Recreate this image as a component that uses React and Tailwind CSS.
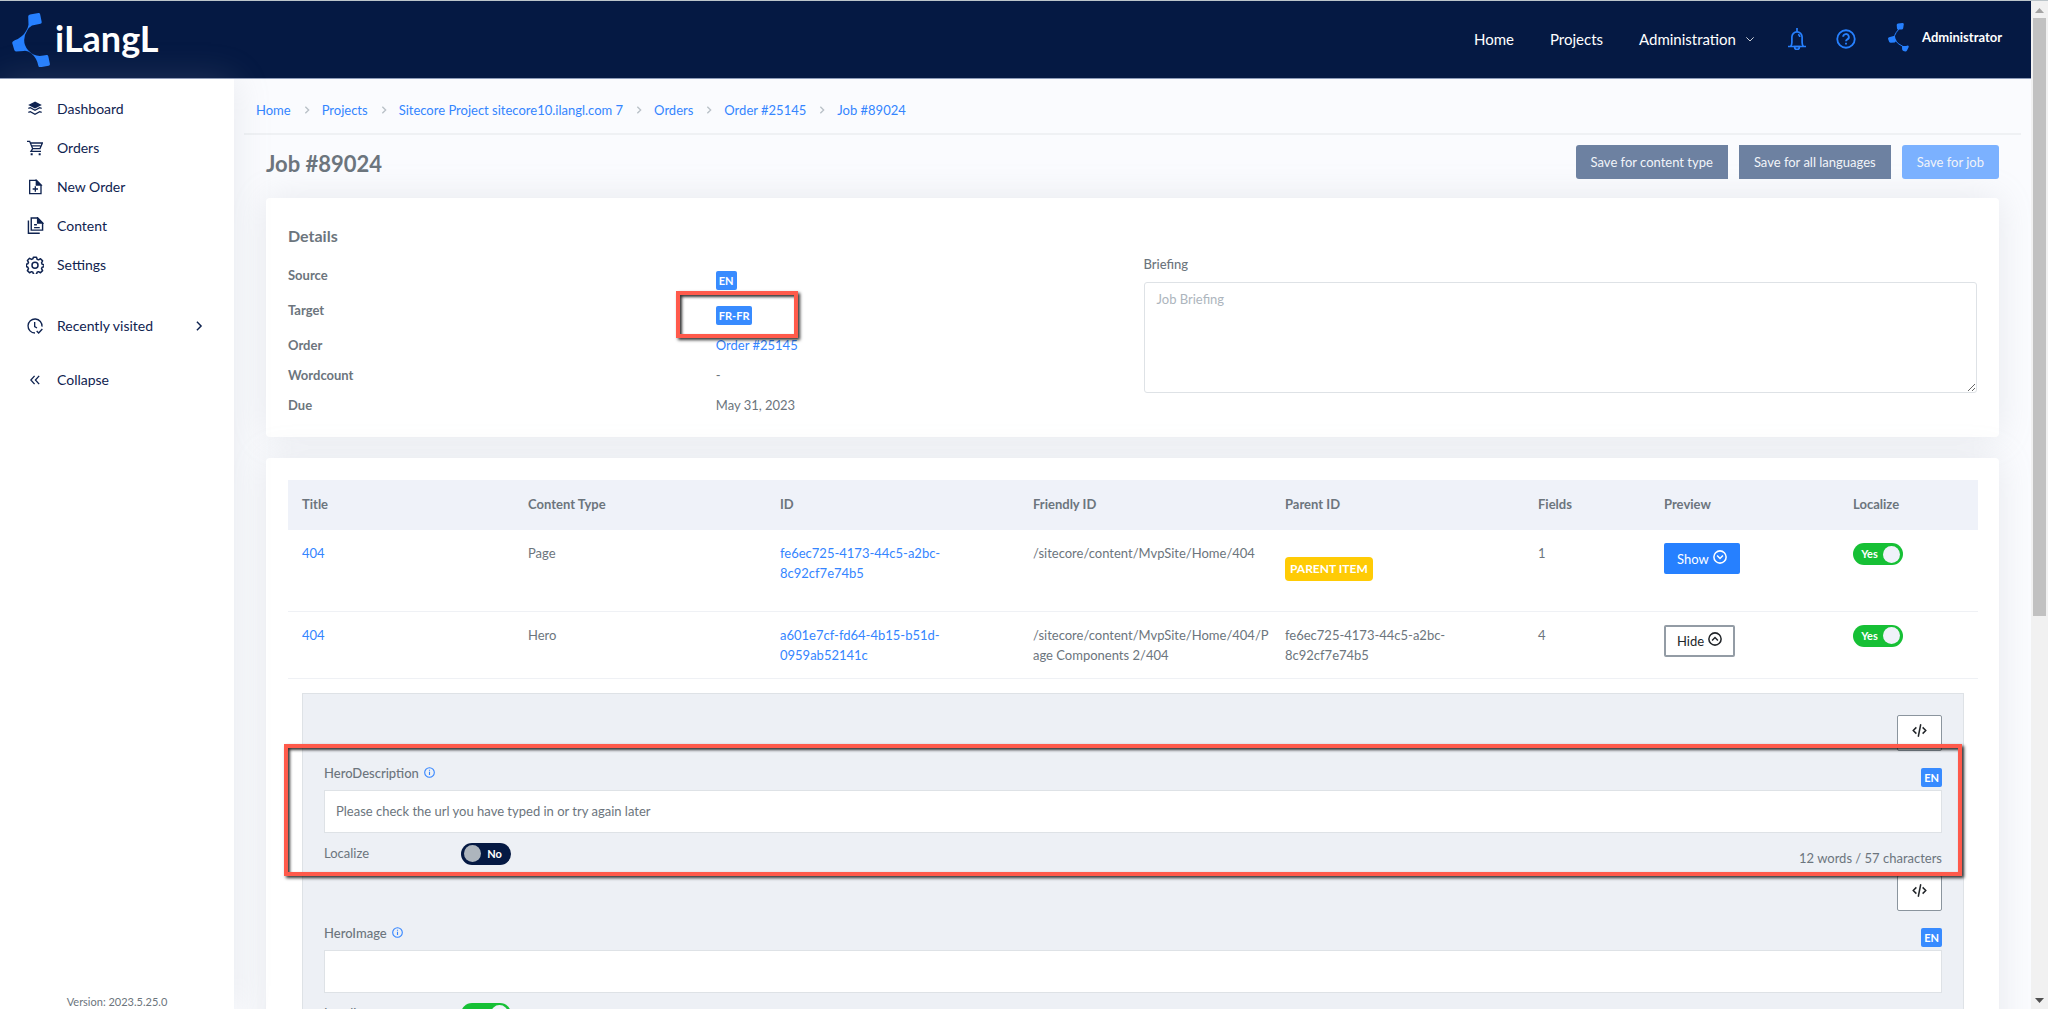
import React, { useState } from 'react';

const breadcrumbs = [
  'Home',
  'Projects',
  'Sitecore Project sitecore10.ilangl.com 7',
  'Orders',
  'Order #25145',
  'Job #89024',
];

const menu = [
  { label: 'Dashboard', icon: LayersIcon },
  { label: 'Orders', icon: CartIcon },
  { label: 'New Order', icon: FilePlusIcon },
  { label: 'Content', icon: FilesIcon },
  { label: 'Settings', icon: GearIcon },
];

const items = [
  {
    title: '404',
    type: 'Page',
    id: 'fe6ec725-4173-44c5-a2bc-8c92cf7e74b5',
    friendlyId: '/sitecore/content/MvpSite/Home/404',
    parentId: null,
    fields: 1,
    open: false,
  },
  {
    title: '404',
    type: 'Hero',
    id: 'a601e7cf-fd64-4b15-b51d-0959ab52141c',
    friendlyId: '/sitecore/content/MvpSite/Home/404/Page Components 2/404',
    parentId: 'fe6ec725-4173-44c5-a2bc-8c92cf7e74b5',
    fields: 4,
    open: true,
  },
];

const heroFields = [
  {
    name: 'HeroDescription',
    value: 'Please check the url you have typed in or try again later',
    localize: false,
    count: '12 words / 57 characters',
    marked: true,
  },
  { name: 'HeroImage', value: '', localize: true },
];

export default function App() {
  return (
    <div className="flex h-screen overflow-hidden border-t border-[#bcc5ca] bg-[#fafbfe] font-['Lato',sans-serif] text-[13px] leading-5 text-[#6c757d]">
      <div className="flex min-w-0 flex-1 flex-col">
        <Header />
        <div className="flex min-h-0 flex-1">
          <Sidebar />
          <main className="min-w-0 flex-1 overflow-hidden px-[10px]">
            <Breadcrumbs />
            <div className="px-[22px]">
              <div className="flex items-start justify-between pt-[10px] pb-[19px]">
                <h1 className="pt-1 text-[22px] leading-[30px] font-bold">Job #89024</h1>
                <div className="flex gap-[11px] text-[#f1f4f9]">
                  <button type="button" className="h-[34px] rounded-l-[3px] bg-[#6d81a1] px-[15px]">
                    Save for content type
                  </button>
                  <button type="button" className="h-[34px] bg-[#6d81a1] px-[15px]">
                    Save for all languages
                  </button>
                  <button type="button" className="h-[34px] rounded-[3px] bg-[#7bb1ff] px-[15px]">
                    Save for job
                  </button>
                </div>
              </div>
              <DetailsCard />
              <ItemsCard />
            </div>
          </main>
        </div>
      </div>
      <ScrollTrack />
    </div>
  );
}

function Header() {
  return (
    <header className="flex h-[78px] shrink-0 items-center justify-between border-b border-[#8d9bb8] bg-[#051943] pr-[29px] pl-[12px] text-[15px] text-white">
      <a href="#" className="flex items-center gap-[5px]">
        <LogoMark className="h-[54px] w-[38px]" />
        <span className="pb-1 text-[36px] leading-10 font-bold">iLangL</span>
      </a>
      <nav className="flex items-center pb-px">
        <a href="#" className="mr-[36px]">Home</a>
        <a href="#" className="mr-[36px]">Projects</a>
        <a href="#" className="mr-[34px] flex items-center gap-[10px]">
          Administration
          <Icon className="size-[8px]" stroke="2.4"><path d="M1 7l11 11L23 7" /></Icon>
        </a>
        <button type="button" aria-label="Notifications" className="mr-[30px] text-[#2680ff]">
          <BellIcon />
        </button>
        <button type="button" aria-label="Help" className="mr-[32px] text-[#2680ff]">
          <Icon className="size-[20px]" stroke="2.2">
            <circle cx="12" cy="12" r="10.5" />
            <path d="M8.6 9.4a3.4 3.4 0 1 1 5 3c-1.1.6-1.6 1.1-1.6 2.4M12 16.4v2.2" />
          </Icon>
        </button>
        <a href="#" className="flex items-center gap-[13px] text-[13px] font-bold">
          <Avatar />
          <span className="pb-1">Administrator</span>
        </a>
      </nav>
    </header>
  );
}

function Sidebar() {
  return (
    <aside className="relative z-10 flex w-[234px] shrink-0 flex-col bg-white pt-[10px] text-sm text-[#0f2350] shadow-[0_0_35px_rgba(154,161,171,0.2)]">
      {menu.map(({ label, icon: MenuIcon }) => (
        <a key={label} href="#" className="flex h-[39px] items-center pl-[26px]">
          <span className="flex w-[31px] items-center pl-px"><MenuIcon /></span>
          {label}
        </a>
      ))}
      <a href="#" className="mt-[22px] flex h-[39px] items-center pr-[30px] pl-[26px]">
        <span className="w-[31px] pl-px"><ClockCheckIcon /></span>
        <span className="flex-1">Recently visited</span>
        <Icon className="size-[10px]" stroke="3.5"><path d="M7 2l10 10L7 22" /></Icon>
      </a>
      <button type="button" className="mt-[15px] flex h-[39px] items-center pl-[26px]">
        <span className="w-[31px] pl-[4px]">
          <Icon className="size-[10px]" stroke="3.2"><path d="M11 2L2 12l9 10M22 2l-9 10 9 10" /></Icon>
        </span>
        Collapse
      </button>
      <p className="mt-auto text-center text-[11px] leading-[14px] text-[#6c757d]">Version: 2023.5.25.0</p>
    </aside>
  );
}

function Breadcrumbs() {
  return (
    <nav className="flex h-[56px] items-center border-b-2 border-[#eff1f4] pt-[11px] pb-1 pl-[12px]">
      {breadcrumbs.map((crumb, index) => (
        <React.Fragment key={crumb}>
          {index > 0 && (
            <Icon className="mr-[11px] ml-[12px] size-[8px] text-[#b9c0c7]" stroke="4"><path d="M7 2l10 10L7 22" /></Icon>
          )}
          <a href="#" className="text-[#3485ff]">{crumb}</a>
        </React.Fragment>
      ))}
    </nav>
  );
}

function DetailsCard() {
  return (
    <section className="grid grid-cols-2 gap-[22px] rounded bg-white p-[22px] shadow-[0_0_35px_rgba(154,161,171,0.2)]">
      <div>
        <h2 className="mb-[13px] text-base leading-8 font-bold">Details</h2>
        <dl>
          <DetailRow label="Source" height="h-[35px]">
            <Badge className="mt-[6px]">EN</Badge>
          </DetailRow>
          <DetailRow label="Target" height="h-[35px]">
            <Badge className="mt-[6px]">FR-FR</Badge>
            <Marker className="-top-[9px] -left-[40px] h-[47px] w-[122px]" />
          </DetailRow>
          <DetailRow label="Order" height="h-[30px]">
            <a href="#" className="text-[#3485ff]">Order #25145</a>
          </DetailRow>
          <DetailRow label="Wordcount" height="h-[30px]">-</DetailRow>
          <DetailRow label="Due" height="h-[20px]">May 31, 2023</DetailRow>
        </dl>
      </div>
      <div className="pt-[34px]">
        <label htmlFor="briefing" className="mb-[8px] block font-medium">Briefing</label>
        <textarea
          id="briefing"
          placeholder="Job Briefing"
          className="block h-[111px] w-full rounded-[3px] border border-[#dee2e6] bg-white px-[12px] py-[6px] placeholder:text-[#adb5bd]"
        />
      </div>
    </section>
  );
}

function DetailRow({ label, height, children }) {
  return (
    <div className={`grid grid-cols-2 gap-[22px] ${height}`}>
      <dt className="font-bold">{label}</dt>
      <dd className="relative">{children}</dd>
    </div>
  );
}

function ItemsCard() {
  return (
    <section className="mt-[21px] rounded bg-white p-[22px] shadow-[0_0_35px_rgba(154,161,171,0.2)]">
      <table className="w-full table-fixed text-left">
        <colgroup>
          <col className="w-[226px]" />
          <col className="w-[252px]" />
          <col className="w-[253px]" />
          <col className="w-[252px]" />
          <col className="w-[253px]" />
          <col className="w-[126px]" />
          <col className="w-[189px]" />
          <col className="w-[139px]" />
        </colgroup>
        <thead>
          <tr className="h-[50px] bg-[#eff2f9]">
            {['Title', 'Content Type', 'ID', 'Friendly ID', 'Parent ID', 'Fields', 'Preview', 'Localize'].map((head) => (
              <th key={head} className="px-[14px] pb-[2px] font-bold">{head}</th>
            ))}
          </tr>
        </thead>
        <tbody>
          {items.map((item) => (
            <ItemRow key={item.id} item={item} />
          ))}
          <tr>
            <td colSpan={8} className="p-[14px]">
              <div className="border border-[#dee2e6] bg-[#edf0f5] px-[21px] pt-[21px]">
                {heroFields.map((field) => (
                  <FieldEditor key={field.name} field={field} />
                ))}
              </div>
            </td>
          </tr>
        </tbody>
      </table>
    </section>
  );
}

function ItemRow({ item }) {
  return (
    <tr className={`border-b border-[#eff1f5] align-top [&>td]:px-[14px] [&>td]:py-[13px] ${item.open ? '' : 'h-[81px]'}`}>
      <td><a href="#" className="text-[#3485ff]">{item.title}</a></td>
      <td>{item.type}</td>
      <td><a href="#" className="text-[#3485ff]">{item.id}</a></td>
      <td><div className="-mr-[14px] break-all">{item.friendlyId}</div></td>
      <td>
        {item.parentId ?? (
          <span className="mt-[14px] inline-block h-[24px] rounded bg-[#ffcb05] px-[5px] text-xs leading-6 font-bold text-white">
            PARENT ITEM
          </span>
        )}
      </td>
      <td>{item.fields}</td>
      <td>
        {item.open ? (
          <button type="button" className="flex h-[32px] items-center gap-[4px] rounded-[2px] border-2 border-[#939ca5] bg-white px-[11px] text-[#212529]">
            Hide
            <Icon className="mb-1 size-[14px]" stroke="2.6">
              <circle cx="12" cy="12" r="10.5" />
              <path d="M7 14.5l5-5 5 5" />
            </Icon>
          </button>
        ) : (
          <button type="button" className="flex h-[31px] items-center gap-[4px] rounded-[2px] bg-[#2680ff] px-[13px] text-white">
            Show
            <Icon className="mb-1 size-[14px]" stroke="2.6">
              <circle cx="12" cy="12" r="10.5" />
              <path d="M7 9.5l5 5 5-5" />
            </Icon>
          </button>
        )}
      </td>
      <td><Toggle defaultOn label={`Localize ${item.type}`} /></td>
    </tr>
  );
}

function FieldEditor({ field }) {
  const [value, setValue] = useState(field.value);

  return (
    <div className="relative">
      <div className="flex justify-end">
        <button
          type="button"
          aria-label="Show source"
          className="flex h-[36px] w-[45px] items-center justify-center rounded-[2px] border border-[#8b959e] bg-white pb-1 text-[#212529]"
        >
          <Icon className="size-[15px]" stroke="2.4"><path d="M7 7l-5 5 5 5M17 7l5 5-5 5M14 2l-4 20" /></Icon>
        </button>
      </div>
      <div className="flex h-[39px] items-start justify-between">
        <label htmlFor={field.name} className="mt-[12px] flex items-center gap-[5px] font-medium">
          {field.name}
          <Icon className="size-[11px] text-[#3485ff]" stroke="2.4">
            <circle cx="12" cy="12" r="10.5" />
            <path d="M12 10.5v7M12 6v2.4" />
          </Icon>
        </label>
        <Badge className="mt-[17px]">EN</Badge>
      </div>
      <input
        id={field.name}
        value={value}
        onChange={(e) => setValue(e.target.value)}
        className="block h-[43px] w-full border border-[#dee2e6] bg-white px-[11px]"
      />
      <div className="flex h-[42px] pt-[10px]">
        <span className="w-[137px]">Localize</span>
        <Toggle defaultOn={field.localize} label={`Localize ${field.name}`} />
        <span className="ml-auto pt-[5px]">{field.count}</span>
      </div>
      {field.marked && <Marker className="top-[29px] -right-[20px] -bottom-px -left-[40px]" />}
    </div>
  );
}

function Toggle({ defaultOn, label }) {
  const [on, setOn] = useState(defaultOn);

  return (
    <label className={`relative flex h-[22px] w-[50px] items-center rounded-full px-[3px] text-[11px] font-bold text-white ${on ? 'bg-[#16c035]' : 'flex-row-reverse bg-[#051943]'}`}>
      <input type="checkbox" className="sr-only" aria-label={label} checked={on} onChange={() => setOn(!on)} />
      <span className="flex-1 text-center">{on ? 'Yes' : 'No'}</span>
      <span className={`size-[17px] rounded-full ${on ? 'bg-[#eff2f9]' : 'bg-[#adb5bd]'}`} />
    </label>
  );
}

function Badge({ className, children }) {
  return (
    <span className={`block h-[19px] w-fit rounded-[2px] bg-[#388bff] px-[3px] text-[11px] leading-[19px] font-bold text-white ${className}`}>
      {children}
    </span>
  );
}

/* Red annotation frame laid over the page */
function Marker({ className }) {
  return (
    <div className={`pointer-events-none absolute z-10 border-4 border-[#ff5a4b] shadow-[2px_2px_3px_rgba(0,0,0,0.8),inset_2px_2px_3px_rgba(0,0,0,0.8)] ${className}`} />
  );
}

function ScrollTrack() {
  return (
    <div className="flex w-[17px] shrink-0 flex-col items-center bg-[#f1f1f1] text-[#505050]" aria-hidden="true">
      <svg className="h-[17px] w-[9px] shrink-0 text-[#a3a3a3]" viewBox="0 0 9 17"><path d="M0 12l4.5-5L9 12z" fill="currentColor" /></svg>
      <div className="w-[13px] flex-[598] bg-[#c1c1c1]" />
      <div className="flex-[376]" />
      <svg className="h-[17px] w-[9px] shrink-0" viewBox="0 0 9 17"><path d="M0 6l4.5 5L9 6z" fill="currentColor" /></svg>
    </div>
  );
}

function Icon({ className, stroke = '2', children }) {
  return (
    <svg className={`shrink-0 ${className}`} viewBox="0 0 24 24" fill="none" stroke="currentColor" strokeWidth={stroke}>
      {children}
    </svg>
  );
}

function LayersIcon() {
  return (
    <Icon className="size-[16px]" stroke="2">
      <path d="M12 2L4 6l8 4 8-4z" fill="currentColor" />
      <path d="M2 11l3-1 7 4 7-4 3 1M2 17l3-1 7 4 7-4 3 1" />
    </Icon>
  );
}

function CartIcon() {
  return (
    <Icon className="size-[16px]" stroke="2">
      <path d="M0 2h4l4.5 11h11L23 4.5H5M8.5 13L6 17h15M7 8.700h13" />
      <path d="M5.500 20h3v3h-3zM17.500 20h3v3h-3z" fill="currentColor" stroke="none" />
    </Icon>
  );
}

function FilePlusIcon() {
  return (
    <Icon className="size-[16px]" stroke="2">
      <path d="M14 2H4v20h17V9zM12.500 11v8M8.500 15h8" />
      <path d="M14 2v7h7z" fill="currentColor" />
    </Icon>
  );
}

function FilesIcon() {
  return (
    <Icon className="size-[17px]" stroke="2">
      <path d="M15 1.500H6v17h16V8.500zM2 5v18h16M10 11h4M10 15h8" />
      <path d="M15 1.500v7h7z" fill="currentColor" />
    </Icon>
  );
}

function GearIcon() {
  return (
    <Icon className="-ml-px size-[18px]" stroke="2">
      <path
        strokeLinejoin="round"
        d="M10 1.500h4l.8 2.800 1.900.8 2.600-1.400 2.800 2.800-1.400 2.600.8 1.900 2.500.8v2.400l-2.500.8-.8 1.900 1.400 2.600-2.800 2.800-2.600-1.400-1.900.8-.8 2.800h-4l-.8-2.800-1.900-.8-2.600 1.400-2.800-2.800 1.400-2.600-.8-1.900L.5 14v-3l2-.6.8-1.900-1.400-2.600 2.800-2.800 2.600 1.400 1.900-.8z"
      />
      <circle cx="12" cy="12.300" r="4" />
    </Icon>
  );
}

function ClockCheckIcon() {
  return (
    <Icon className="size-[16px]" stroke="2">
      <path d="M12 22.500A10.500 10.500 0 1 1 22.500 13M11.500 6v7l3.500 2M14.500 19.500l3 3 5.500-6" />
    </Icon>
  );
}

function BellIcon() {
  return (
    <svg className="h-[22px] w-[18px]" viewBox="0 0 18 22" fill="none" stroke="currentColor" strokeWidth="1.700">
      <path d="M0 18.500h18M2.500 18.500c1-1 1.400-2 1.400-4V9a5.100 5.100 0 0 1 10.200 0v5.500c0 2 .4 3 1.400 4M9 0v4M10 6.500c1.300.3 1.800 1 1.800 2.500" />
      <path d="M6.500 18.500h5a2.500 3 0 0 1-5 0z" />
    </svg>
  );
}

function LogoMark({ className }) {
  return (
    <svg className={className} viewBox="0 0 38 54" fill="#2680ff">
      <path d="M18 1.400l8.500-1.300q1.400-.1 1.700 1.300L29.700 9q.2 1.400-1.200 1.800L20 12.500q-3 1.800-4.500 4.500-5 7.500-2.500 15 2.200 6 8.500 9.500 4.500 2.200 10 1l3-.6q1.500-.2 1.800 1.300l1.600 7.500q.3 1.500-1.300 2l-8 1.500q-1.600.2-2.200-1.300-1.600-8-7-12.400-3.400-3-7.400-2.600l-8 .5q-1.300 0-1.700-1.300L.2 30q-.2-1.700 2.600-2.800 8-3 11.700-10 1.500-2.600 2-5.500L16.200 3.500q0-1.800 1.800-2.100z" />
    </svg>
  );
}

function Avatar() {
  return (
    <svg className="mb-1 h-[29px] w-[21px]" viewBox="0 0 21 29" fill="#2680ff">
      <path d="M10 .6L14.500 0q1.300 0 1.300 1.300l-.6 4q-.3 1.300-1.600 1.300h-3.200q-1.200 0-1.400-1.200L8.700 2Q8.700.8 10 .6zM5.600 13q1.400-.4 1.500 1 .2 2 1.500 3.500l-1.800 1.900-4 .4q-1.300 0-1.700-1L.1 16q-.3-1.300 1-1.800zM14 23q4 .4 5.500-.5 1.500 0 1.200 1.400L19 27.400q-.6 1.200-1.800 1l-1.800-.5q-1.200-.5-1.300-1.700z" />
      <path d="M11 6Q4.500 13 7 17t8 6.500" fill="none" stroke="#2680ff" strokeWidth="1" />
    </svg>
  );
}
